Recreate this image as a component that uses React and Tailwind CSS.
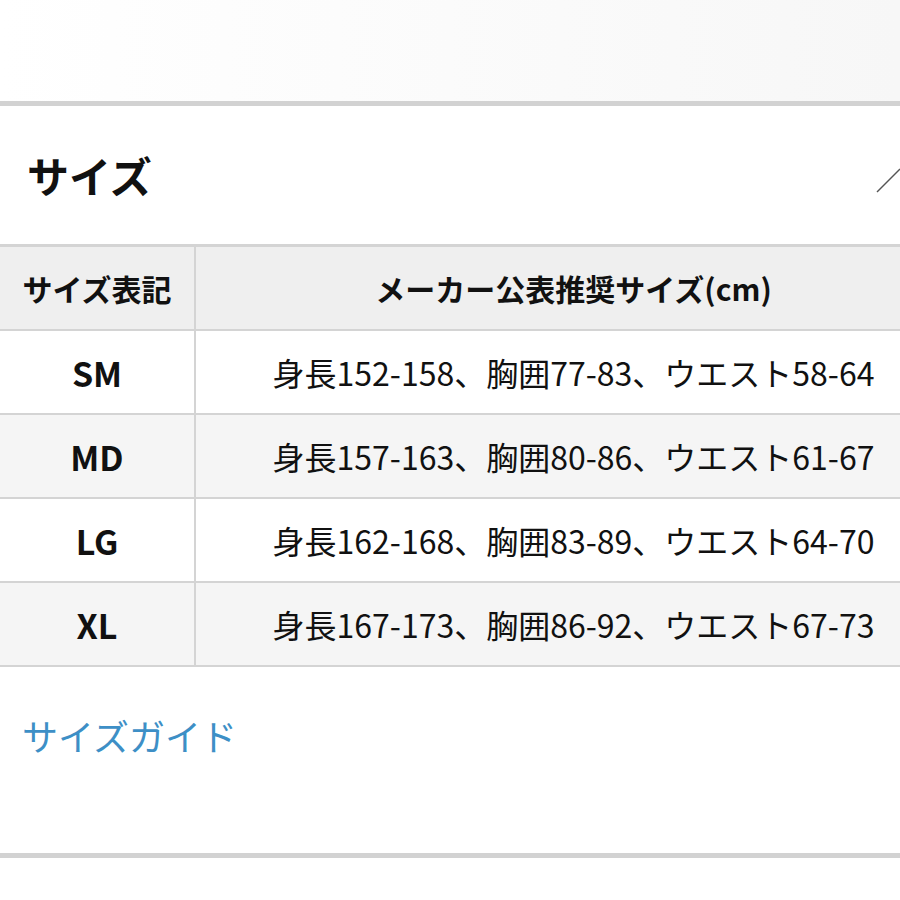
import React from 'react';

const ROWS = [
    { size: 'SM', text: '身長152-158、胸囲77-83、ウエスト58-64' },
    { size: 'MD', text: '身長157-163、胸囲80-86、ウエスト61-67' },
    { size: 'LG', text: '身長162-168、胸囲83-89、ウエスト64-70' },
    { size: 'XL', text: '身長167-173、胸囲86-92、ウエスト67-73' },
];

const FONT = { fontFamily: '"Noto Sans CJK JP", "Noto Sans", sans-serif' };

const App = () => {
    return (
        <div className="w-[900px] h-[900px] overflow-hidden bg-white text-[#111]" style={FONT}>
            {/* top blank area */}
            <div className="h-[101px] bg-gradient-to-r from-white via-[#fbfbfb] to-[#f7f7f7]"></div>
            <div className="h-[5px] bg-[#d2d2d2]"></div>

            {/* Heading */}
            <div className="h-[138px] flex items-center justify-between pl-[27px]">
                <h2 className="text-[42px] font-bold leading-none">サイズ</h2>
                <svg width="24" height="26" viewBox="0 0 24 26" className="mt-[12px]">
                    <path d="M1 24 L24 1" stroke="#555" strokeWidth="1.5" fill="none" />
                </svg>
            </div>

            {/* Table */}
            <div className="w-[951px] border-t-[3px] border-[#d4d4d4]">
                <div className="flex h-[84px] bg-[#efefef] border-b-2 border-[#d4d4d4]">
                    <div className="w-[196px] shrink-0 border-r-2 border-[#d4d4d4] flex items-center justify-center text-[30px] font-bold">
                        サイズ表記
                    </div>
                    <div className="flex-1 flex items-center justify-center text-[30px] font-bold">
                        メーカー公表推奨サイズ(cm)
                    </div>
                </div>
                {ROWS.map((r, i) => (
                    <div
                        key={r.size}
                        className={`flex h-[84px] border-b-2 border-[#d4d4d4] ${i % 2 === 1 ? 'bg-[#f5f5f5]' : 'bg-white'}`}
                    >
                        <div className="w-[196px] shrink-0 border-r-2 border-[#d4d4d4] flex items-center justify-center text-[34px] font-bold">
                            {r.size}
                        </div>
                        <div className="flex-1 flex items-center justify-center text-[32px] font-normal">
                            {r.text}
                        </div>
                    </div>
                ))}
            </div>

            {/* Link */}
            <div className="h-[186px] flex items-center pl-[22px] pb-[50px]">
                <a className="text-[36px] text-[#3d8fc6] leading-none">サイズガイド</a>
            </div>
            <div className="h-[5px] bg-[#d2d2d2]"></div>
        </div>
    );
};

export default App;
